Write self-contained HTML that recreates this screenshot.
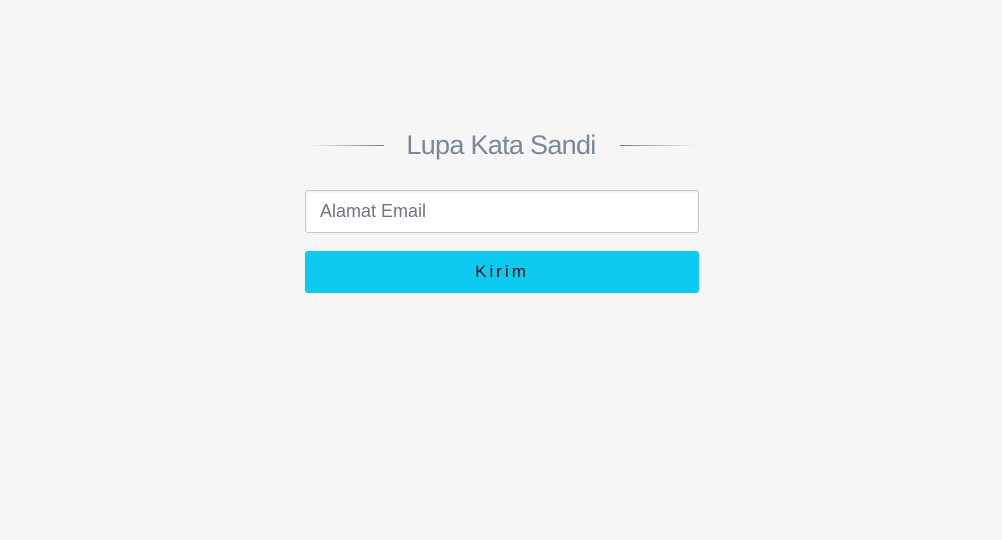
<!DOCTYPE html>
<html><head><style>
body{margin:0;background:#f6f6f6;width:1002px;height:540px;position:relative;font-family:"Liberation Sans",sans-serif;overflow:hidden}
.t{position:absolute;left:300px;width:402px;top:128px;text-align:center;font-size:27px;color:#778899;letter-spacing:-0.7px;line-height:34px}
.l{position:absolute;top:145px;height:1px;width:76px}
.l1{left:308px;background:linear-gradient(to right,rgba(120,120,120,0),#777)}
.l2{left:620px;background:linear-gradient(to right,#777,rgba(120,120,120,0))}
.i{position:absolute;left:305px;top:190px;width:392px;height:41px;background:#fff;border:1px solid #c8c8c8;border-radius:3px;box-shadow:inset 0 1px 3px rgba(0,0,0,.08);box-sizing:content-box}
.i span{position:absolute;left:14px;top:10px;font-size:18px;color:#6f7782}
.b{position:absolute;left:305px;top:251px;width:394px;height:42px;background:#0ccaf0;border-radius:3px;text-align:center;line-height:42px;font-size:17px;letter-spacing:3px;color:#111}
</style></head><body>
<div class="l l1"></div><div class="l l2"></div>
<div class="t">Lupa Kata Sandi</div>
<div class="i"><span>Alamat Email</span></div>
<div class="b">Kirim</div>
</body></html>
